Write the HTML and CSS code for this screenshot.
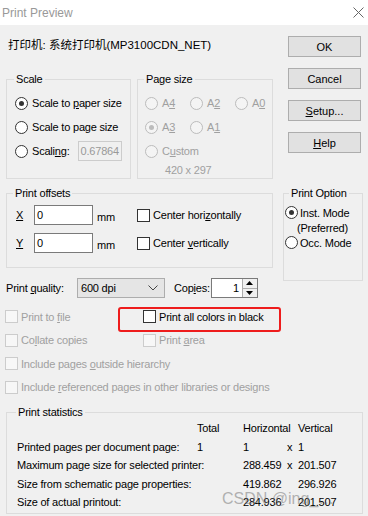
FILE: index.html
```html
<!DOCTYPE html>
<html lang="en">
<head>
    <meta charset="UTF-8">
    <title>Print Preview</title>
    <link rel="stylesheet" href="styles.css">
</head>
<body>
    <!-- Title bar -->
    <div class="titlebar">
        <span class="title">Print Preview</span>
        <svg class="close" width="11" height="11" viewBox="0 0 11 11">
            <path d="M0.5 0.5 L10.5 10.5 M10.5 0.5 L0.5 10.5" stroke="#666" stroke-width="1" fill="none"/>
        </svg>
    </div>

    <div class="dialog">
        <div class="top">
            <div class="left">
                <div class="printer">打印机: 系统打印机(MP3100CDN_NET)</div>

                <div class="groups">
                    <fieldset class="group scale">
                        <legend>Scale</legend>
                        <div class="opt"><span class="radio checked"></span><span>Scale to <u>p</u>aper size</span></div>
                        <div class="opt"><span class="radio"></span><span>Scale to page size</span></div>
                        <div class="opt"><span class="radio"></span><span>Scali<u>n</u>g:</span><span class="field disabled scaling">0.67864</span></div>
                    </fieldset>

                    <fieldset class="group pagesize">
                        <legend>Page size</legend>
                        <div class="size-grid">
                            <div class="opt off"><span class="radio"></span><span>A<u>4</u></span></div>
                            <div class="opt off"><span class="radio"></span><span>A<u>2</u></span></div>
                            <div class="opt off"><span class="radio"></span><span>A<u>0</u></span></div>
                            <div class="opt off"><span class="radio checked"></span><span>A<u>3</u></span></div>
                            <div class="opt off"><span class="radio"></span><span>A<u>1</u></span></div>
                            <div></div>
                            <div class="opt off wide"><span class="radio"></span><span>C<u>u</u>stom</span></div>
                        </div>
                        <div class="custom-size">420 x 297</div>
                    </fieldset>
                </div>

                <fieldset class="group offsets">
                    <legend>Print offsets</legend>
                    <div class="offset-row">
                        <span class="axis"><u>X</u></span>
                        <span class="field num">0</span>
                        <span class="unit">mm</span>
                        <span class="check"></span>
                        <span>Center hori<u>z</u>ontally</span>
                    </div>
                    <div class="offset-row">
                        <span class="axis"><u>Y</u></span>
                        <span class="field num">0</span>
                        <span class="unit">mm</span>
                        <span class="check"></span>
                        <span>Center <u>v</u>ertically</span>
                    </div>
                </fieldset>

                <div class="quality-row">
                    <span class="quality-label">Print <u>q</u>uality:</span>
                    <span class="select"><span>600 dpi</span>
                        <svg width="10" height="6" viewBox="0 0 10 6">
                            <path d="M0.5 0.5 L5 5 L9.5 0.5" stroke="#444" stroke-width="1" fill="none"/>
                        </svg>
                    </span>
                    <span class="copies-label">Cop<u>i</u>es:</span>
                    <span class="spin">
                        <span class="spin-value">1</span>
                        <span class="spin-btns">
                            <span class="spin-btn"><svg width="7" height="4" viewBox="0 0 7 4"><path d="M0 4 L3.5 0 L7 4 Z" fill="#000"/></svg></span>
                            <span class="spin-btn"><svg width="7" height="4" viewBox="0 0 7 4"><path d="M0 0 L3.5 4 L7 0 Z" fill="#000"/></svg></span>
                        </span>
                    </span>
                </div>

                <div class="checks">
                    <div class="opt off"><span class="check"></span><span>Print to <u>f</u>ile</span></div>
                    <div class="opt"><span class="check"></span><span>Print all colors in black</span></div>
                    <div class="opt off"><span class="check"></span><span>Co<u>l</u>late copies</span></div>
                    <div class="opt off"><span class="check"></span><span>Print <u>a</u>rea</span></div>
                    <div class="opt off span"><span class="check"></span><span>Include pages <u>o</u>utside hierarchy</span></div>
                    <div class="opt off span"><span class="check"></span><span>Include <u>r</u>eferenced pages in other libraries or designs</span></div>
                </div>
            </div>

            <div class="right">
                <div class="buttons">
                    <button class="btn">OK</button>
                    <button class="btn">Cancel</button>
                    <button class="btn"><u>S</u>etup...</button>
                    <button class="btn"><u>H</u>elp</button>
                </div>
                <fieldset class="group option">
                    <legend>Print Option</legend>
                    <div class="opt small"><span class="radio checked"></span><span>Inst. Mode</span></div>
                    <div class="opt small indent"><span>(Preferred)</span></div>
                    <div class="opt small"><span class="radio"></span><span>Occ. Mode</span></div>
                </fieldset>
            </div>
        </div>

        <fieldset class="group stats">
            <legend>Print statistics</legend>
            <div class="stats-grid">
                <span></span><span>Total</span><span>Horizontal</span><span></span><span>Vertical</span>
                <span>Printed pages per document page:</span><span>1</span><span>1</span><span>x</span><span>1</span>
                <span>Maximum page size for selected printer:</span><span></span><span>288.459</span><span>x</span><span>201.507</span>
                <span>Size from schematic page properties:</span><span></span><span>419.862</span><span></span><span>296.926</span>
                <span>Size of actual printout:</span><span></span><span>284.936</span><span></span><span>201.507</span>
            </div>
        </fieldset>
    </div>

    <!-- annotation and watermark lying over the dialog -->
    <div class="highlight"></div>
    <div class="watermark">CSDN @ing_…</div>
</body>
</html>
```

FILE: styles.css
```css
/* Reset */
* {
    margin: 0;
    padding: 0;
    box-sizing: border-box;
}

body {
    font-family: 'Liberation Sans', 'Noto Sans CJK SC', sans-serif;
    font-size: 11px;
    letter-spacing: -0.2px;
    color: #000;
    background: #f0f0f0;
    width: 368px;
    height: 516px;
    overflow: hidden;
    position: relative;
}

u {
    text-decoration: underline;
    text-underline-offset: 1px;
}

/* Title bar */
.titlebar {
    height: 25px;
    background: #fff;
    display: flex;
    align-items: center;
    justify-content: space-between;
    padding: 0 4px 0 2px;
}

.title {
    font-size: 12px;
    letter-spacing: 0;
    color: #999;
}

/* Dialog */
.dialog {
    padding: 0 5px 0 6px;
}

.top {
    display: flex;
}

.left {
    width: 267px;
}

.right {
    width: 80px;
    margin-left: 10px;
    padding-top: 11px;
}

.printer {
    margin-top: 13px;
    height: 14px;
    line-height: 14px;
    padding-left: 2px;
    font-size: 11.5px;
    letter-spacing: 0;
}

/* Group boxes */
.group {
    border: 1px solid #dcdcdc;
    padding: 6px 8px 0;
    min-width: 0;
}

.group legend {
    line-height: 12px;
    padding: 0 2px;
    margin-left: -1px;
}

.groups {
    display: flex;
    gap: 6px;
    margin-top: 21px;
}

.scale {
    width: 125px;
    height: 106px;
}

.pagesize {
    width: 136px;
    height: 106px;
    padding-left: 7px;
}

/* Radio / check rows */
.opt {
    display: flex;
    align-items: center;
    gap: 4px;
    height: 24px;
    white-space: nowrap;
}

.opt.off {
    color: #a0a0a0;
}

.radio {
    width: 13px;
    height: 13px;
    border: 1px solid #333;
    border-radius: 50%;
    background: #fff;
    position: relative;
    flex: none;
}

.radio.checked::after {
    content: '';
    position: absolute;
    left: 3px;
    top: 3px;
    width: 5px;
    height: 5px;
    border-radius: 50%;
    background: #333;
}

.off .radio {
    border-color: #bcbcbc;
    background: #f4f4f4;
}

.off .radio.checked::after {
    background: #bcbcbc;
}

.check {
    width: 13px;
    height: 13px;
    border: 1px solid #333;
    background: #fff;
    flex: none;
}

.off .check {
    border-color: #cccccc;
    background: #f7f7f7;
}

.field {
    height: 20px;
    line-height: 18px;
    border: 1px solid #7a7a7a;
    background: #fff;
    padding: 0 2px;
}

.field.disabled {
    border-color: #cccccc;
    background: #f0f0f0;
    color: #999;
}

.scaling {
    width: 46px;
    margin-left: 4px;
}

.size-grid {
    display: grid;
    grid-template-columns: 45px 45px 45px;
}

.size-grid .wide {
    grid-column: span 2;
}

.custom-size {
    color: #a0a0a0;
    padding-left: 20px;
    line-height: 14px;
}

/* Print offsets */
.offsets {
    margin-top: 8px;
    height: 81px;
    padding-left: 7px;
}

.offset-row {
    display: flex;
    align-items: center;
    height: 20px;
    margin-bottom: 8px;
}

.axis {
    width: 20px;
    padding-left: 2px;
}

.num {
    width: 59px;
}

.unit {
    width: 44px;
    padding-left: 4px;
    padding-top: 4px;
}

.offset-row .check {
    margin-right: 3px;
}

/* Quality row */
.quality-row {
    display: flex;
    align-items: center;
    height: 20px;
    margin-top: 10px;
    white-space: nowrap;
}

.quality-label {
    width: 71px;
}

.select {
    width: 88px;
    height: 20px;
    background: #e5e5e5;
    border: 1px solid #adadad;
    display: flex;
    align-items: center;
    justify-content: space-between;
    padding: 0 6px 0 3px;
}

.copies-label {
    margin-left: 9px;
    margin-right: 1px;
}

.spin {
    display: flex;
    width: 47px;
    height: 20px;
    border: 1px solid #7a7a7a;
    background: #fff;
}

.spin-value {
    flex: 1;
    text-align: right;
    line-height: 18px;
    padding-right: 3px;
}

.spin-btns {
    width: 15px;
    display: flex;
    flex-direction: column;
    border-left: 1px solid #adadad;
}

.spin-btn {
    flex: 1;
    display: flex;
    align-items: center;
    justify-content: center;
    background: #f0f0f0;
}

.spin-btn + .spin-btn {
    border-top: 1px solid #adadad;
}

/* Checkbox grid */
.checks {
    display: grid;
    grid-template-columns: 138px 1fr;
    grid-auto-rows: 23.5px;
    margin: 7px 0 0 -1px;
}

.checks .opt {
    height: auto;
    gap: 3px;
}

.checks .span {
    grid-column: span 2;
}

/* Buttons */
.buttons {
    display: flex;
    flex-direction: column;
    gap: 11px;
    padding-left: 5px;
}

.btn {
    width: 73px;
    height: 21px;
    font-family: inherit;
    font-size: 11px;
    letter-spacing: 0;
    color: #000;
    background: #e1e1e1;
    border: 1px solid #adadad;
}

.option {
    margin-top: 34px;
    height: 94px;
    padding: 6px 1px 0;
}

.option legend {
    margin-left: 4px;
}

.opt.small {
    height: 15px;
    gap: 2px;
}

.opt.indent {
    padding-left: 12px;
}

/* Statistics */
.stats {
    margin-top: 7px;
    height: 108px;
    padding: 3px 0 0 10px;
}

.stats-grid {
    display: grid;
    grid-template-columns: 180px 46px 44px 11px 1fr;
    grid-auto-rows: 14px;
    row-gap: 4.5px;
    line-height: 14px;
    white-space: nowrap;
}

/* Overlays */
.highlight {
    position: absolute;
    left: 118px;
    top: 307px;
    width: 163px;
    height: 25px;
    border: 2px solid #ee1c1c;
    border-radius: 3px;
}

.watermark {
    position: absolute;
    left: 222px;
    top: 490px;
    font-size: 16px;
    letter-spacing: 0;
    color: rgba(110, 110, 110, 0.5);
    white-space: nowrap;
}
```
